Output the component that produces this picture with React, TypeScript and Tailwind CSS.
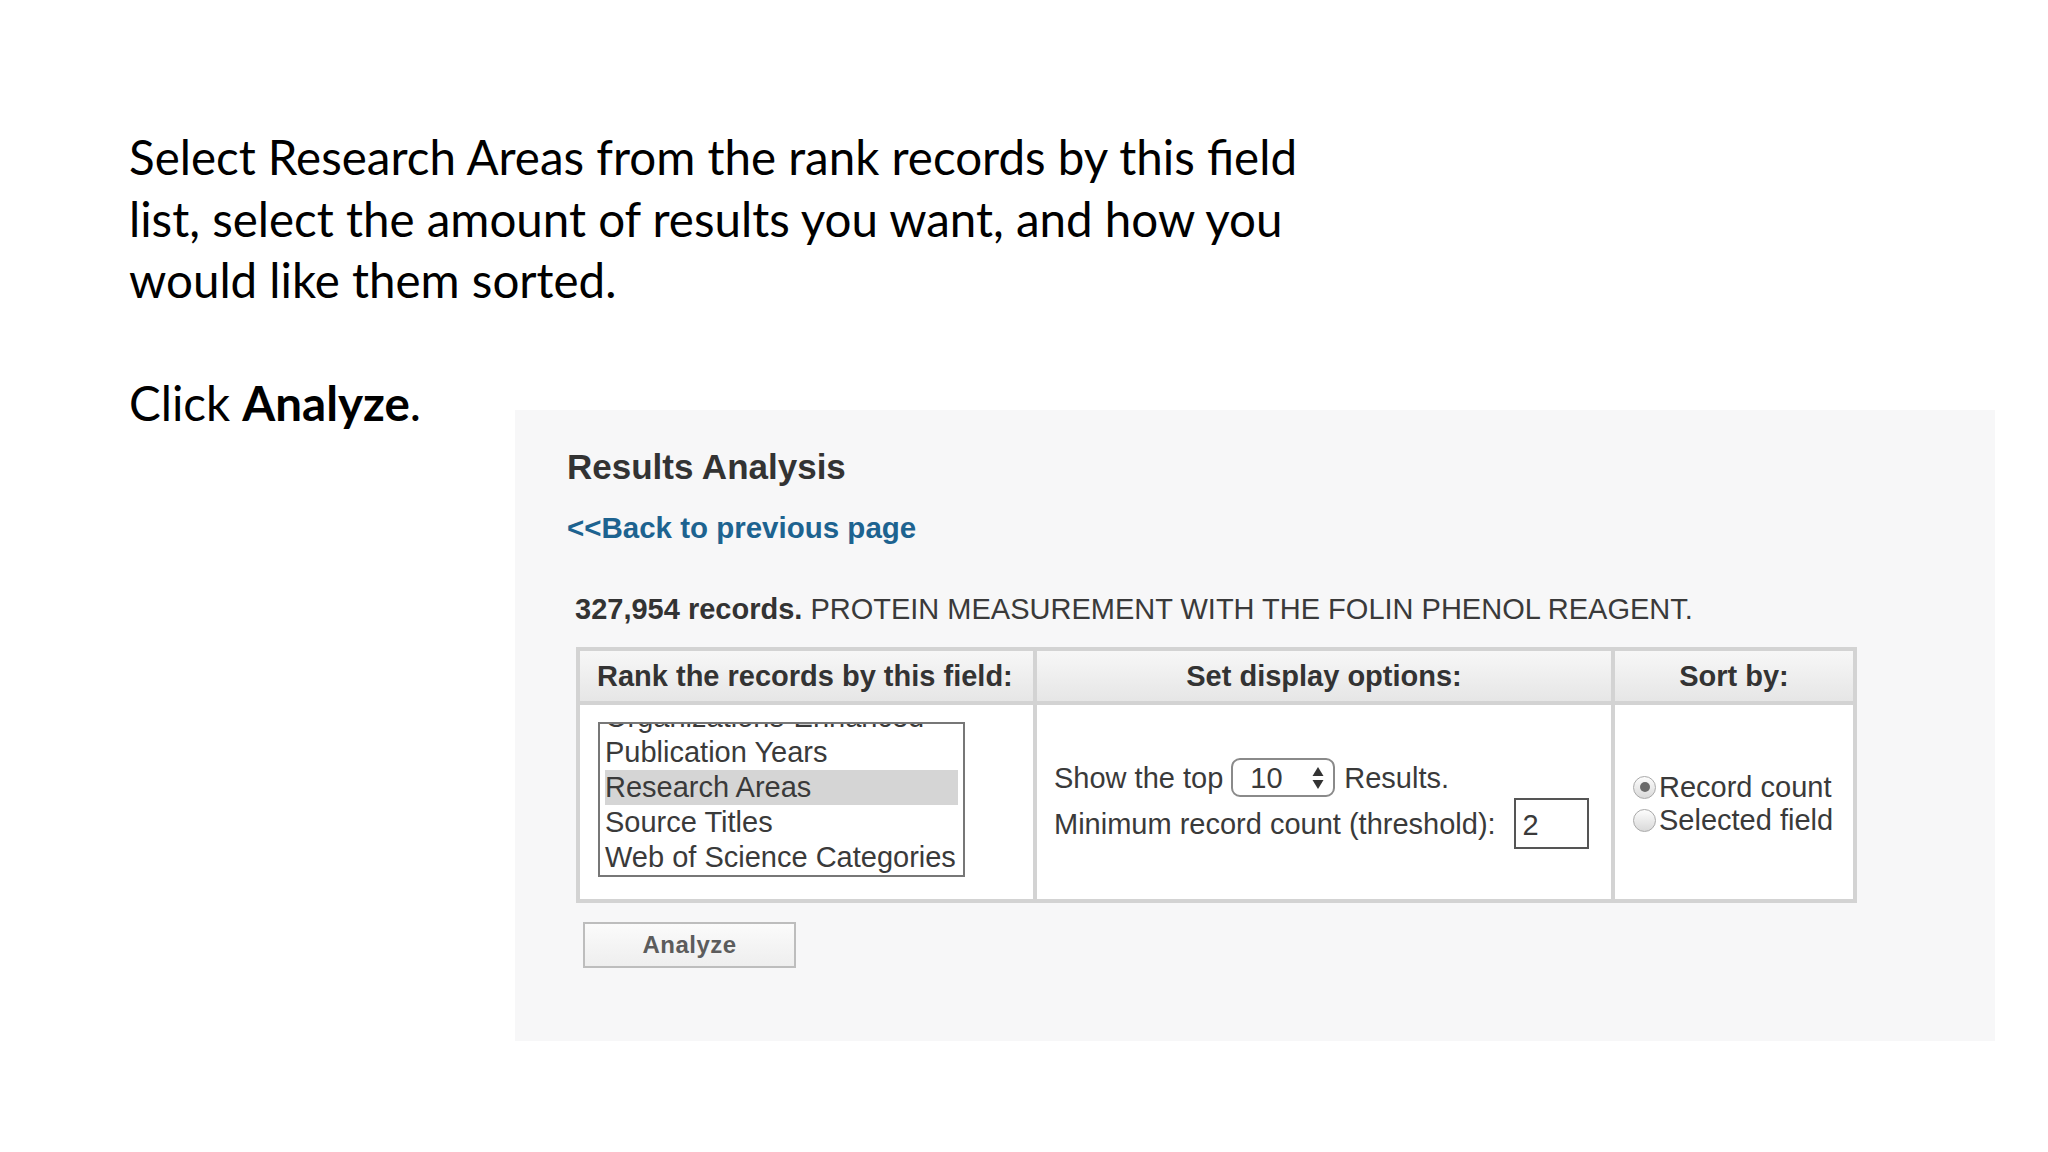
import { useState } from 'react';

const fields = [
  'Organizations-Enhanced',
  'Publication Years',
  'Research Areas',
  'Source Titles',
  'Web of Science Categories',
];

const Radio = ({ checked }: { checked: boolean }) => (
  <span className="flex h-[23px] w-[23px] shrink-0 items-center justify-center rounded-full border border-[#a9a9a9] bg-gradient-to-b from-[#fdfdfd] to-[#d9d9d9]">
    {checked && <span className="h-[10px] w-[10px] rounded-full bg-[#6a6a6a]" />}
  </span>
);

export default function App() {
  const [campo, setCampo] = useState('Research Areas');
  const [orden, setOrden] = useState<'count' | 'field'>('count');

  return (
    <div className="min-h-[1152px] w-[2048px] bg-white pl-[129px] pt-[126px]">
      {/* texto de la diapositiva */}
      <p className="text-[47.5px] leading-[61.5px] text-black [font-family:Lato,'Open_Sans',sans-serif]">
        Select Research Areas from the rank records by this field
        <br />
        list, select the amount of results you want, and how you
        <br />
        would like them sorted.
      </p>

      <div className="mt-[61.5px] flex items-start">
        <div className="w-[386px] shrink-0 text-[47.5px] leading-[61.5px] text-black [font-family:Lato,'Open_Sans',sans-serif]">
          Click <span className="font-bold">Analyze</span>.
        </div>

        {/* captura de Web of Science */}
        <div className="mt-[38px] h-[631px] w-[1480px] bg-[#f7f7f8] pl-[52px] pt-[37px] text-[#333] [font-family:'Liberation_Sans',Arial,sans-serif]">
          <h1 className="text-[35px] font-bold leading-[40px] text-[#333]">Results Analysis</h1>
          <a className="mt-[24px] block text-[29.5px] font-bold leading-[34px] text-[#1d6390]">&lt;&lt;Back to previous page</a>

          <div className="ml-2 mt-[47px] text-[29px] leading-[34px] text-[#3a3a3a]">
            <span className="font-bold text-[#333]">327,954 records.</span> PROTEIN MEASUREMENT WITH THE FOLIN PHENOL REAGENT.
          </div>

          <div className="ml-[9px] mt-[21px] w-[1281px] border-4 border-[#d3d3d3]">
            <div className="grid grid-cols-[453px_578px_242px] border-b-4 border-[#d3d3d3] bg-gradient-to-b from-[#f7f7f7] to-[#e6e6e6] text-[29px] font-bold leading-[50px] text-[#333]">
              <div className="h-[50px] pl-[17px]">Rank the records by this field:</div>
              <div className="h-[50px] border-l-4 border-[#d3d3d3] text-center">Set display options:</div>
              <div className="h-[50px] border-l-4 border-[#d3d3d3] text-center">Sort by:</div>
            </div>

            <div className="grid h-[194px] grid-cols-[453px_578px_242px] bg-white text-[29px] text-[#3a3a3a]">
              <div className="pl-[18px] pt-[17px]">
                <div className="h-[155px] w-[367px] overflow-hidden border-2 border-[#777]">
                  <div className="-mt-[24px]">
                    {fields.map((f) => (
                      <div
                        key={f}
                        onClick={() => setCampo(f)}
                        className={`mx-[5px] h-[35px] cursor-default whitespace-nowrap leading-[35px] ${campo === f ? 'bg-[#d5d5d5]' : ''}`}
                      >
                        {f}
                      </div>
                    ))}
                  </div>
                </div>
              </div>

              <div className="flex flex-col justify-center gap-[1px] border-l-4 border-[#d3d3d3] pl-[17px] pt-[3px]">
                <div className="flex h-[39px] items-center leading-[34px]">
                  <span>Show the top</span>
                  <span className="ml-[8px] flex h-[39px] w-[104px] items-center rounded-[9px] border-2 border-[#8a8a8a] bg-white pl-[17px] pr-[8px]">
                    <span className="flex-1">10</span>
                    <svg width="14" height="26" viewBox="0 0 14 26">
                      <path d="M7 2 L12.5 11 H1.5 Z" fill="#333" />
                      <path d="M7 24 L12.5 15 H1.5 Z" fill="#333" />
                    </svg>
                  </span>
                  <span className="ml-[9px]">Results.</span>
                </div>
                <div className="flex h-[51px] items-center leading-[34px]">
                  <span>Minimum record count (threshold):</span>
                  <span className="ml-[18px] flex h-[51px] w-[75px] items-center border-2 border-[#555] bg-white pl-[7px] pt-[2px]">2</span>
                </div>
              </div>

              <div className="flex flex-col justify-center border-l-4 border-[#d3d3d3] pl-[18px] pt-[3px]">
                <div className="flex h-[33px] items-center gap-[3px] leading-[33px]" onClick={() => setOrden('count')}>
                  <Radio checked={orden === 'count'} />
                  <span>Record count</span>
                </div>
                <div className="flex h-[33px] items-center gap-[3px] leading-[33px]" onClick={() => setOrden('field')}>
                  <Radio checked={orden === 'field'} />
                  <span>Selected field</span>
                </div>
              </div>
            </div>
          </div>

          <button className="ml-[16px] mt-[19px] flex h-[46px] w-[213px] items-center justify-center border-2 border-[#bdbdbd] bg-gradient-to-b from-[#fbfbfb] to-[#eeeeee] text-[24px] font-bold tracking-[0.5px] text-[#5c5c5c]">
            Analyze
          </button>
        </div>
      </div>
    </div>
  );
}
